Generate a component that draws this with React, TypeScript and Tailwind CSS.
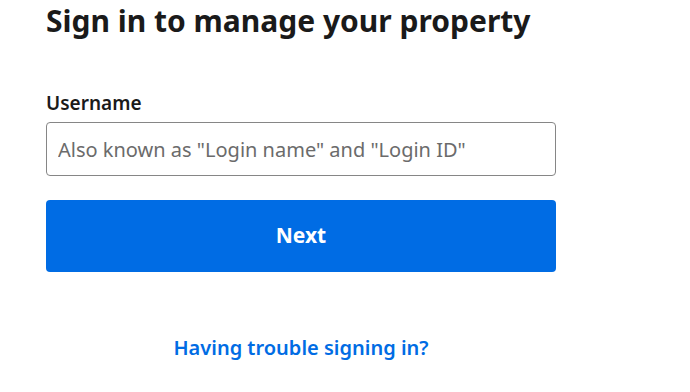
export default function App() {
  return (
    <div className="min-h-screen bg-white font-['Noto_Sans',sans-serif] text-[#1a1a1a]">
      <div className="w-[510px] ml-[46px] pt-[1px]">
        <h1 className="text-[30px] leading-[40px] font-bold">
          Sign in to manage your property
        </h1>

        <form className="mt-[50px]" onSubmit={(e) => e.preventDefault()}>
          <label
            htmlFor="username"
            className="block text-[19px] leading-[24px] font-semibold"
          >
            Username
          </label>
          <input
            id="username"
            type="text"
            placeholder='Also known as "Login name" and "Login ID"'
            className="mt-[7px] block w-full h-[54px] rounded-[4px] border border-[#868686] px-[11px] text-[20px] text-[#1a1a1a] placeholder:text-[#6b6b6b] outline-none"
          />
          <button
            type="submit"
            className="mt-[24px] w-full h-[72px] rounded-[4px] bg-[#006ce4] text-white text-[21px] font-bold"
          >
            Next
          </button>
        </form>

        <div className="mt-[62px] text-center leading-[28px]">
          <a href="#" className="text-[20px] font-semibold text-[#006ce4]">
            Having trouble signing in?
          </a>
        </div>
      </div>
    </div>
  );
}
